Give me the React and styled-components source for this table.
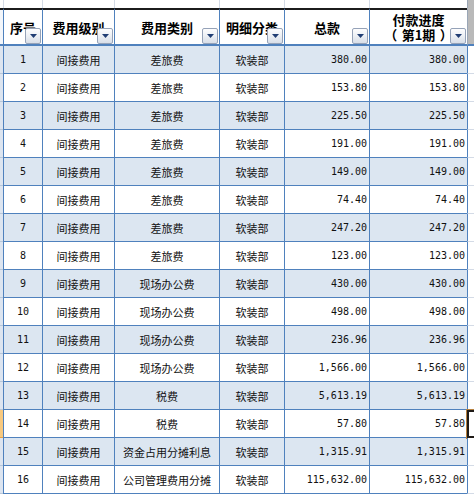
import React from "react";
import styled, { createGlobalStyle } from "styled-components";

const BLUE = "#4f81bd";
const BAND = "#dce6f1";
const GRID = "#d4dbe6";
const COLS = "3px 39px 72px 105px 65px 85px 98px 7px";

const GlobalStyle = createGlobalStyle`
  html, body { margin: 0; padding: 0; background: #ffffff; }
  body { font-family: "Noto Sans CJK SC", "Noto Sans", sans-serif; }
`;

const Sheet = styled.div`
  width: 474px;
  height: 496px;
  overflow: hidden;
  display: flex;
  flex-direction: column;
  background: #ffffff;
`;

const Row = styled.div`
  display: grid;
  grid-template-columns: ${COLS};
  box-sizing: border-box;
  height: ${(p) => p.$h}px;
  flex: none;
`;

/* ---- spacer (row above the table) ---- */
const SpacerEdge = styled.div`
  background: #ffffff;
`;
const SpacerCell = styled.div`
  border-left: 1px solid ${GRID};
`;
const SpacerTail = styled.div`
  background: #b9b9b9;
  border-left: 1px solid #9aa6b6;
`;

/* ---- header ---- */
const HeaderEdge = styled.div`
  box-sizing: border-box;
  background: #f3f6fa;
  border-top: 2px solid #1c1c1c;
  border-bottom: 2px solid ${BLUE};
`;
const HeaderCell = styled.div`
  position: relative;
  box-sizing: border-box;
  border-left: 1px solid ${BLUE};
  border-top: 2px solid #1c1c1c;
  border-bottom: 2px solid ${BLUE};
  display: flex;
  align-items: center;
  justify-content: center;
  text-align: center;
  font-family: "Noto Sans CJK SC", sans-serif;
  font-weight: 700;
  font-size: 13px;
  line-height: 15px;
  color: #000000;
  white-space: nowrap;
  overflow: hidden;
`;
const HeaderLine = styled.span`
  display: flex;
  justify-content: center;
`;
const Paren = styled.span`
  display: inline-block;
  width: 11px;
  font-feature-settings: "halt" 1;
  text-align: ${(p) => (p.$close ? "right" : "left")};
`;
const HeaderTail = styled.div`
  box-sizing: border-box;
  background: #b9b9b9;
  border-left: 1px solid #9aa6b6;
  border-top: 2px solid #b9b9b9;
  border-bottom: 2px solid ${BLUE};
`;
const FilterButton = styled.span`
  position: absolute;
  right: 1px;
  bottom: 0;
  width: 16px;
  height: 16px;
  box-sizing: border-box;
  border: 1px solid #95a2b8;
  border-radius: 2px;
  background: linear-gradient(180deg, #fdfdfe 0%, #eef1f5 45%, #d8dee8 100%);
  display: flex;
  align-items: center;
  justify-content: center;
`;

/* ---- data ---- */
const RowEdge = styled.div`
  box-sizing: border-box;
  background: ${(p) => (p.$active ? "#f8c97f" : "#dde5f0")};
  border-bottom: 1px solid ${(p) => (p.$active ? "#e3a24a" : "#b7c7da")};
`;
const DataCell = styled.div`
  box-sizing: border-box;
  background: ${(p) => (p.$band ? BAND : "#ffffff")};
  border-left: 1px solid ${BLUE};
  border-bottom: 1px solid ${BLUE};
  display: flex;
  align-items: center;
  justify-content: ${(p) => (p.$align === "right" ? "flex-end" : "center")};
  padding: ${(p) => (p.$align === "right" ? "0 2px 0 0" : "0")};
  font-family: ${(p) =>
    p.$mono
      ? `"DejaVu Sans Mono", "Liberation Mono", monospace`
      : `"Noto Sans CJK SC", sans-serif`};
  font-size: ${(p) => (p.$mono ? "10px" : "11px")};
  color: #111111;
  white-space: nowrap;
  overflow: hidden;
`;
const RowTail = styled.div`
  position: relative;
  box-sizing: border-box;
  background: #ffffff;
  border-left: 1px solid ${BLUE};
  border-bottom: 1px solid ${GRID};
`;
const ActiveMarker = styled.span`
  position: absolute;
  left: -1px;
  top: 0;
  width: 12px;
  height: 28px;
  box-sizing: border-box;
  border: 2px solid #1e1a16;
  outline: 1px solid #b7813f;
`;

const Arrow = () => (
  <svg width="7" height="4" viewBox="0 0 7 4">
    <polygon points="0,0 7,0 3.5,4" fill="#213e74" />
  </svg>
);

const headers = [
  [["序号"]],
  [["费用级别"]],
  [["费用类别"]],
  [["明细分类"]],
  [["总款"]],
  [["付款进度"], ["（", "第1期", "）"]],
];

const rows = [
  [1, "间接费用", "差旅费", "软装部", "380.00", "380.00"],
  [2, "间接费用", "差旅费", "软装部", "153.80", "153.80"],
  [3, "间接费用", "差旅费", "软装部", "225.50", "225.50"],
  [4, "间接费用", "差旅费", "软装部", "191.00", "191.00"],
  [5, "间接费用", "差旅费", "软装部", "149.00", "149.00"],
  [6, "间接费用", "差旅费", "软装部", "74.40", "74.40"],
  [7, "间接费用", "差旅费", "软装部", "247.20", "247.20"],
  [8, "间接费用", "差旅费", "软装部", "123.00", "123.00"],
  [9, "间接费用", "现场办公费", "软装部", "430.00", "430.00"],
  [10, "间接费用", "现场办公费", "软装部", "498.00", "498.00"],
  [11, "间接费用", "现场办公费", "软装部", "236.96", "236.96"],
  [12, "间接费用", "现场办公费", "软装部", "1,566.00", "1,566.00"],
  [13, "间接费用", "税费", "软装部", "5,613.19", "5,613.19"],
  [14, "间接费用", "税费", "软装部", "57.80", "57.80"],
  [15, "间接费用", "资金占用分摊利息", "软装部", "1,315.91", "1,315.91"],
  [16, "间接费用", "公司管理费用分摊", "软装部", "115,632.00", "115,632.00"],
];

export default function App() {
  return (
    <>
      <GlobalStyle />
      <Sheet>
        <Row $h={8}>
          <SpacerEdge />
          {headers.map((_, i) => (
            <SpacerCell key={i} />
          ))}
          <SpacerTail />
        </Row>
        <Row $h={38}>
          <HeaderEdge />
          {headers.map((lines, i) => (
            <HeaderCell key={i}>
              <div>
                {lines.map((parts, j) => (
                  <HeaderLine key={j}>
                    {parts.length === 3 ? (
                      <>
                        <Paren>{parts[0]}</Paren>
                        {parts[1]}
                        <Paren $close>{parts[2]}</Paren>
                      </>
                    ) : (
                      parts[0]
                    )}
                  </HeaderLine>
                ))}
              </div>
              <FilterButton>
                <Arrow />
              </FilterButton>
            </HeaderCell>
          ))}
          <HeaderTail />
        </Row>
        {rows.map((r) => {
          const band = r[0] % 2 === 1;
          const active = r[0] === 14;
          return (
            <Row $h={28} key={r[0]}>
              <RowEdge $active={active} />
              <DataCell $band={band} $mono>
                {r[0]}
              </DataCell>
              <DataCell $band={band}>{r[1]}</DataCell>
              <DataCell $band={band}>{r[2]}</DataCell>
              <DataCell $band={band}>{r[3]}</DataCell>
              <DataCell $band={band} $mono $align="right">
                {r[4]}
              </DataCell>
              <DataCell $band={band} $mono $align="right">
                {r[5]}
              </DataCell>
              <RowTail>{active && <ActiveMarker />}</RowTail>
            </Row>
          );
        })}
      </Sheet>
    </>
  );
}
